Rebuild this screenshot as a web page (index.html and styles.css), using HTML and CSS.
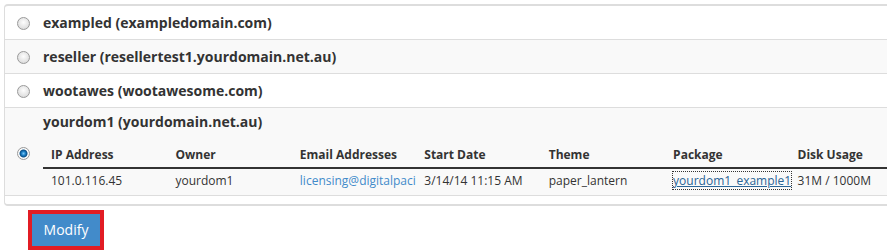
FILE: index.html
```html
<!DOCTYPE html>
<html lang="en-US">
<head>
     <meta charset="UTF-8">
     <meta name="viewport" content="width=device-width, initial-scale=1.0">
     <title>Modify Account</title>
     <link rel="stylesheet" href="styles.css">
</head>
<body class=page>
     <div class=accounts>
          <label class=account>
               <span class=pick><input type=radio name=account class=radio></span>
               <span class=info><span class=name>exampled (exampledomain.com)</span></span>
          </label>
          <label class="account odd">
               <span class=pick><input type=radio name=account class=radio></span>
               <span class=info><span class=name>reseller (resellertest1.yourdomain.net.au)</span></span>
          </label>
          <label class=account>
               <span class=pick><input type=radio name=account class=radio></span>
               <span class=info><span class=name>wootawes (wootawesome.com)</span></span>
          </label>
          <label class="account odd last">
               <span class=pick><input type=radio name=account class=radio checked></span>
               <span class=info>
                    <span class=name>yourdom1 (yourdomain.net.au)</span>
                    <table class=details>
                         <thead>
                              <tr>
                                   <th>IP Address</th>
                                   <th>Owner</th>
                                   <th>Email Addresses</th>
                                   <th>Start Date</th>
                                   <th>Theme</th>
                                   <th>Package</th>
                                   <th>Disk Usage</th>
                              </tr>
                         </thead>
                         <tbody>
                              <tr>
                                   <td>101.0.116.45</td>
                                   <td>yourdom1</td>
                                   <td class=clip><a class=mail href="#">licensing@digitalpaci</a></td>
                                   <td>3/14/14 11:15 AM</td>
                                   <td>paper_lantern</td>
                                   <td><a class="pkg focus" href="#">yourdom1_example1</a></td>
                                   <td>31M / 1000M</td>
                              </tr>
                         </tbody>
                    </table>
               </span>
          </label>
     </div>
     <div class=actions>
          <span class=highlight><button type=button class=button>Modify</button></span>
     </div>
</body>
</html>
```

FILE: styles.css
```css
body.page {
     margin: 0;
     padding: 4px 0 0 4px;
     overflow: hidden;
     font-family: "Open Sans", "Liberation Sans", sans-serif;
     font-size: 12px;
     color: #333;
     background: #fff;
}

.accounts {
     width: 915px;
     border: 1px solid #ddd;
     border-top-width: 2px;
     border-bottom-width: 2px;
     border-radius: 4px;
     padding-bottom: 8px;
     background: #fff;
}

.account {
     display: flex;
     align-items: center;
     padding: 8px 0 7px;
     border-bottom: 1px solid #ddd;
     cursor: pointer;
}

.odd {
     background: #f9f9f9;
}

.last {
     padding: 5px 0 0;
}

.pick {
     width: 38px;
     flex-shrink: 0;
     display: flex;
     justify-content: center;
}

.last .pick {
     margin-top: -2px;
}

.radio {
     appearance: none;
     -webkit-appearance: none;
     width: 13px;
     height: 13px;
     margin: 0 0 0 -1px;
     border: 1px solid #9a9a9a;
     border-radius: 50%;
     background: radial-gradient(circle at 50% 40%, #fdfdfd 0%, #e4e4e4 60%, #cfcfcf 100%);
}

.radio:checked {
     background: radial-gradient(circle, #7cc6f5 0, #1a7fc6 2px, #0b4f86 3.5px, #ffffff 4.5px, #e6e6e6 100%);
}

.info {
     flex: 1;
     min-width: 0;
     display: block;
}

.name {
     display: block;
     font-size: 14px;
     font-weight: bold;
     line-height: 18px;
}

.details {
     border-collapse: collapse;
     table-layout: fixed;
     width: 871px;
     margin-top: 8px;
}

.details th,
.details td {
     text-align: left;
     line-height: 17px;
     white-space: nowrap;
}

.details th {
     padding: 7px 8px 4px;
     font-weight: bold;
     border-bottom: 2px solid #333;
}

.details td {
     padding: 3px 8px 6px;
     font-weight: normal;
}

.details .clip {
     overflow: hidden;
     padding-right: 0;
}

.mail {
     color: #428bca;
     text-decoration: none;
}

.pkg {
     color: #2a6496;
     text-decoration: underline;
}

.focus {
     outline: 1px dotted #333;
}

.actions {
     padding: 4px 0 0 24px;
}

.highlight {
     display: inline-block;
     border: 4px solid #e21c24;
     line-height: 0;
}

.button {
     border: 0;
     border-radius: 0;
     background: #428bca;
     color: #fff;
     font-family: "Open Sans", "Liberation Sans", sans-serif;
     font-size: 14px;
     line-height: 20px;
     padding: 6px 8px;
     width: 68px;
     cursor: pointer;
}
```
